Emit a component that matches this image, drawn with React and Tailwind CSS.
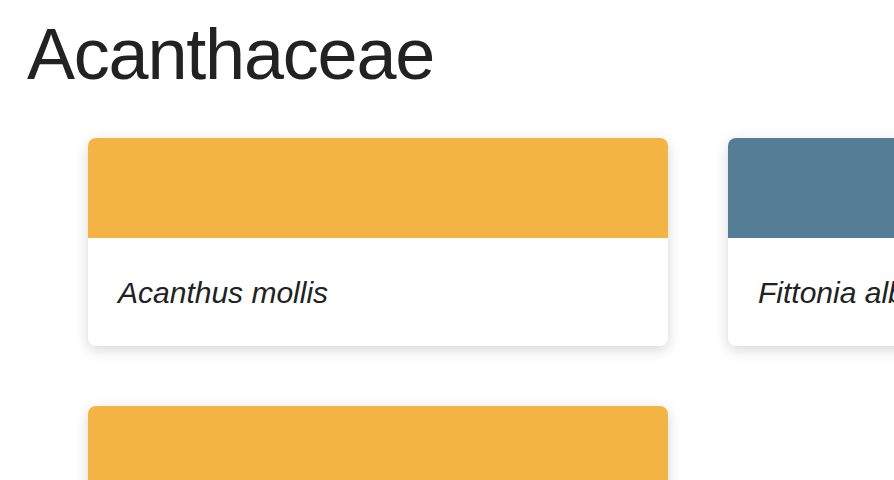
import React from 'react';

const plants = [
  { name: 'Acanthus mollis', color: 'bg-[#f4b443]' },
  { name: 'Fittonia albivenis', color: 'bg-[#557d96]' },
  { name: 'Justicia brandegeeana', color: 'bg-[#f4b443]' },
];

function PlantCard({ plant }) {
  return (
    <div className="w-[580px] shrink-0 rounded-lg bg-white overflow-hidden shadow-[0_4px_14px_rgba(0,0,0,0.16)]">
      <div className={`h-[100px] ${plant.color}`}></div>
      <div className="h-[108px] flex items-center px-[30px]">
        <span className="italic text-[30px] text-[#222] whitespace-nowrap">{plant.name}</span>
      </div>
    </div>
  );
}

export default function App() {
  return (
    <div className="w-[894px] h-[480px] overflow-hidden bg-white text-[#222]" style={{ fontFamily: '"Liberation Sans", Arial, sans-serif' }}>
      <h1 className="pt-[18px] pl-[27px] text-[72px] leading-[72px] tracking-[-1.2px] font-normal">Acanthaceae</h1>
      <div className="mt-[48px] ml-[88px] grid grid-cols-[580px_580px] gap-[60px]">
        {plants.map((p) => (
          <PlantCard key={p.name} plant={p} />
        ))}
      </div>
    </div>
  );
}
